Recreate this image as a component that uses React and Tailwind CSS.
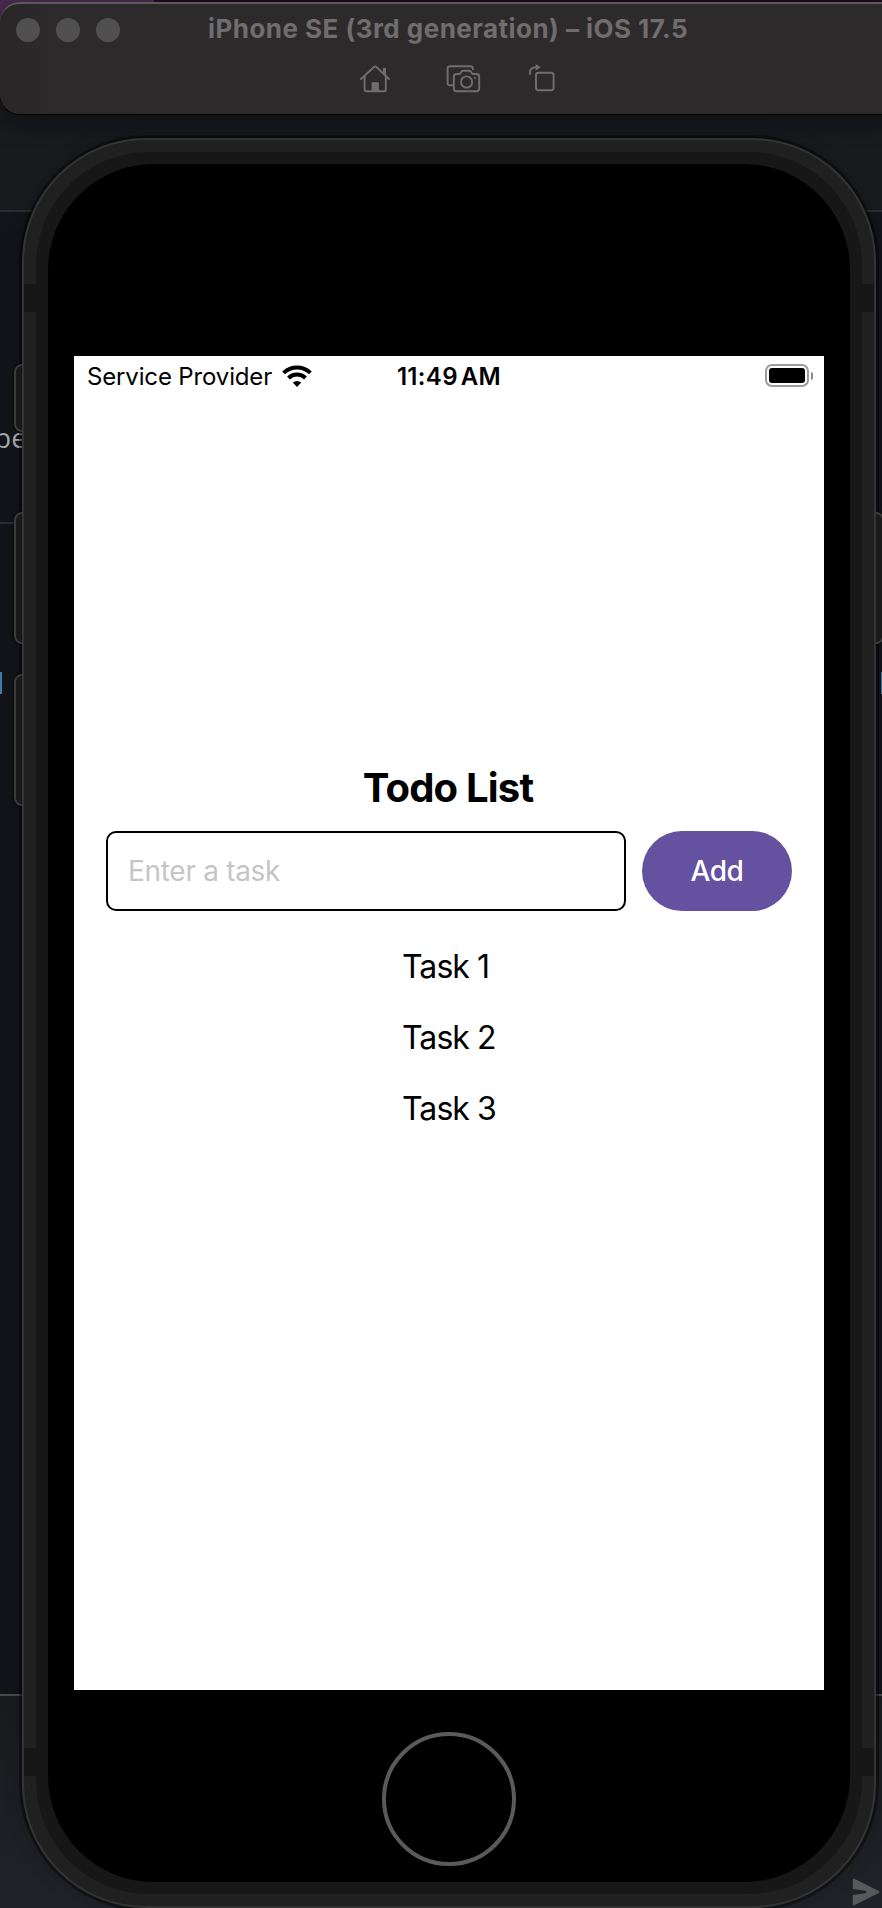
const tasks = ['Task 1', 'Task 2', 'Task 3'];

function HomeIcon() {
  return (
    <svg width="32" height="30" viewBox="0 0 32 30" fill="none" stroke="#6f6d6e" strokeWidth="1.9" strokeLinejoin="round" strokeLinecap="round">
      <path d="M2 15 L15.3 2.8 Q16.2 2 17.1 2.8 L30 15" />
      <path d="M5.6 12.5 V25.5 Q5.6 27.3 7.4 27.3 H25 Q26.8 27.3 26.8 25.5 V12.5" />
      <path d="M24.8 9 V4.6 H26 V11" />
      <path d="M12.6 27 V18.2 H19.8 V27 Z" fill="#6f6d6e" stroke="none" />
    </svg>
  );
}

function CameraIcon() {
  return (
    <svg width="36" height="30" viewBox="0 0 36 30" fill="none" stroke="#6f6d6e" strokeWidth="1.9" strokeLinejoin="round" strokeLinecap="round">
      <path d="M6.5 21.3 H4 Q1.6 21.3 1.6 18.9 V4.6 Q1.6 2.2 4 2.2 H24.4 Q27 2.2 27 5.3" />
      <path d="M10.6 10 H12.9 Q14 10 14.7 8.9 L15.6 7.5 Q16.2 6.7 17.2 6.7 H23.2 Q24.2 6.7 24.8 7.5 L25.7 8.9 Q26.4 10 27.5 10 H30.4 Q33.2 10 33.2 12.8 V24.5 Q33.2 27.2 30.4 27.2 H10.6 Q7.8 27.2 7.8 24.5 V12.8 Q7.8 10 10.6 10 Z" />
      <circle cx="20.6" cy="18" r="5.6" />
      <circle cx="28.9" cy="13.8" r="1.1" fill="#6f6d6e" stroke="none" />
    </svg>
  );
}

function RotateIcon() {
  return (
    <svg width="28" height="30" viewBox="0 0 28 30" fill="none" stroke="#6f6d6e" strokeWidth="1.9" strokeLinecap="round">
      <rect x="8" y="8.8" width="17.6" height="17.4" rx="2.4" />
      <path d="M1.9 10 V9 Q1.9 3.2 8 3.2" />
      <path d="M7.6 0 L12.8 3.2 L7.6 6.4 Z" fill="#6f6d6e" stroke="none" />
    </svg>
  );
}

function WifiIcon() {
  return (
    <svg width="30" height="22" viewBox="0 0 30 22" fill="none" stroke="#000" strokeWidth="4">
      <path d="M1.6 7.9 A19.3 19.3 0 0 1 28.4 7.9" />
      <path d="M6.5 13 A12.2 12.2 0 0 1 23.5 13" />
      <path d="M15 22 L10.8 17.6 A6.2 6.2 0 0 1 19.2 17.6 Z" fill="#000" stroke="none" />
    </svg>
  );
}

function BatteryIcon() {
  return (
    <div className="flex items-center gap-[2px]">
      <div className="h-[23px] w-[44px] rounded-[7px] border-2 border-[#9c9c9c] p-[2px]">
        <div className="h-full w-full rounded-[3px] bg-black" />
      </div>
      <div className="h-[8px] w-[2px] rounded-r-full bg-[#8a8a8a]" />
    </div>
  );
}

function TitleBar() {
  return (
    <header className="relative mt-[2px] h-[112px] w-[902px] rounded-[20px] border-t-2 border-[#5b595a] bg-linear-to-r from-[#292627] to-[#2d2a2b] to-6% shadow-[0_1px_0_#000,0_8px_26px_rgba(0,0,0,0.4)]">
      <div className="flex h-[50px] items-center pl-4">
        <div className="mt-[2px] flex gap-4">
          <span className="size-6 rounded-full bg-[#505050]" />
          <span className="size-6 rounded-full bg-[#505050]" />
          <span className="size-6 rounded-full bg-[#505050]" />
        </div>
        <h1 className="ml-[88px] whitespace-nowrap text-[26px] font-bold leading-8 tracking-[0.46px] text-[#6f6d6e]">
          iPhone SE (3rd generation) – iOS 17.5
        </h1>
      </div>
      <div className="flex pl-[359px] pt-[10px]">
        <HomeIcon />
        <div className="ml-[55px]"><CameraIcon /></div>
        <div className="ml-[46px]"><RotateIcon /></div>
      </div>
    </header>
  );
}

function Desktop() {
  return (
    <div className="absolute inset-0 bg-[#121419]">
      <div className="absolute inset-x-0 top-0 h-[60px] bg-[#200921]" />
      <div className="absolute left-0 top-0 h-[60px] w-[154px] bg-[#4a2a4e]" />
      <div className="absolute inset-x-0 top-[60px] h-[150px] bg-[#181a1e]" />
      <div className="absolute inset-x-0 top-[210px] h-[2px] bg-[#2b2c30]" />
      <div className="absolute inset-x-0 top-[522px] h-[2px] bg-[#2b2c30]" />
      <span className="absolute left-[-6px] top-[419px] font-['Open_Sans',sans-serif] text-[28px] leading-9 text-[#a8a9ab]">be</span>
      <div className="absolute left-0 top-[672px] h-[22px] w-[2px] bg-[#3a7ba8]" />
      <div className="absolute right-0 top-[672px] h-[22px] w-px bg-[#3a7ba8]" />
      <div className="absolute inset-x-0 bottom-0 top-[1694px] border-t-2 border-[#4a4a4a] bg-linear-to-b from-[#191a1e] to-[#212227]" />
      <svg className="absolute left-[852px] top-[1878px]" width="28" height="28" viewBox="0 0 28 28" fill="#58595b">
        <path d="M0.8 1.6 Q0.8 0.2 2.2 0.8 L27.2 13.2 Q28 14 27.2 14.8 L2.2 27.2 Q0.8 27.8 0.8 26.4 V17 L13.5 15.3 Q15.3 14 13.5 12.7 L0.8 11 Z" />
      </svg>
    </div>
  );
}

function TodoScreen() {
  return (
    <main className="mx-auto h-[1334px] w-[750px] bg-white text-black">
      <div className="grid h-10 grid-cols-[1fr_auto_1fr] items-center pl-[13px] pr-[11px]">
        <div className="flex items-center gap-[10px]">
          <span className="mt-[2px] whitespace-nowrap text-[24px] leading-8 tracking-[-0.15px]">Service Provider</span>
          <WifiIcon />
        </div>
        <span className="mt-[2px] whitespace-nowrap pr-[2px] text-[24px] font-semibold leading-8 tracking-[0.35px] [word-spacing:-3.5px]">11:49 AM</span>
        <div className="-mt-px flex justify-end"><BatteryIcon /></div>
      </div>
      <section className="flex flex-col px-8 pt-[368px]">
        <h2 className="pr-[2px] text-center text-[40px] font-bold leading-[48px] tracking-[-0.8px]">Todo List</h2>
        <div className="mt-[19px] flex gap-4">
          <input
            className="h-20 w-[520px] rounded-[10px] border-2 border-black px-5 text-[28px] tracking-[-0.3px] outline-none placeholder:text-[#c5c5c7]"
            placeholder="Enter a task"
          />
          <button className="h-20 w-[150px] rounded-full bg-[#64519f] text-[28px] font-medium tracking-[-0.4px] text-white">Add</button>
        </div>
        <ul className="mt-[20px] flex flex-col pl-[296px]">
          {tasks.map((task) => (
            <li key={task} className="h-[71px] text-[32px] leading-[71px] tracking-[-0.95px]">{task}</li>
          ))}
        </ul>
      </section>
    </main>
  );
}

function Device() {
  const key = 'absolute w-[30px] rounded-[8px] border-2 border-[#3a3a3a] bg-[#191919] shadow-[0_0_0_2px_rgba(0,0,0,0.25)]';
  return (
    <div className="relative ml-[22px] mt-[24px] h-[1770px] w-[854px]">
      <div className="relative h-full rounded-[124px] border-2 border-[#343434] bg-[#202020] p-3 shadow-[0_0_0_2px_rgba(0,0,0,0.08),0_0_0_3px_rgba(0,0,0,0.35),0_0_20px_rgba(0,0,0,0.2)]">
        <span className="absolute left-0 top-[144px] h-7 w-3 bg-[#171717]" />
        <span className="absolute right-0 top-[144px] h-7 w-3 bg-[#171717]" />
        <span className="absolute bottom-[130px] left-0 h-7 w-3 bg-[#171717]" />
        <span className="absolute bottom-[130px] right-0 h-7 w-3 bg-[#171717]" />
        <div className="h-full rounded-[113px] bg-[#171717] p-3">
          <div className="h-full rounded-[106px] bg-black pt-[192px]">
            <TodoScreen />
            <div className="mx-auto mt-[42px] size-[134px] rounded-full border-4 border-[#5a5a5a]" />
          </div>
        </div>
      </div>
      <div className="absolute left-[-12px] top-0 h-[800px] w-[12px] overflow-hidden">
        <span className={`${key} left-1 top-[226px] h-[68px]`} />
        <span className={`${key} left-1 top-[374px] h-[132px]`} />
        <span className={`${key} left-1 top-[536px] h-[132px]`} />
      </div>
      <div className="absolute right-[-12px] top-0 h-[800px] w-[12px] overflow-hidden">
        <span className={`${key} right-1 top-[374px] h-[132px]`} />
      </div>
    </div>
  );
}

export default function App() {
  return (
    <div className="relative flex h-[1908px] w-[882px] flex-col overflow-hidden font-['Inter',sans-serif]">
      <Desktop />
      <TitleBar />
      <Device />
    </div>
  );
}
